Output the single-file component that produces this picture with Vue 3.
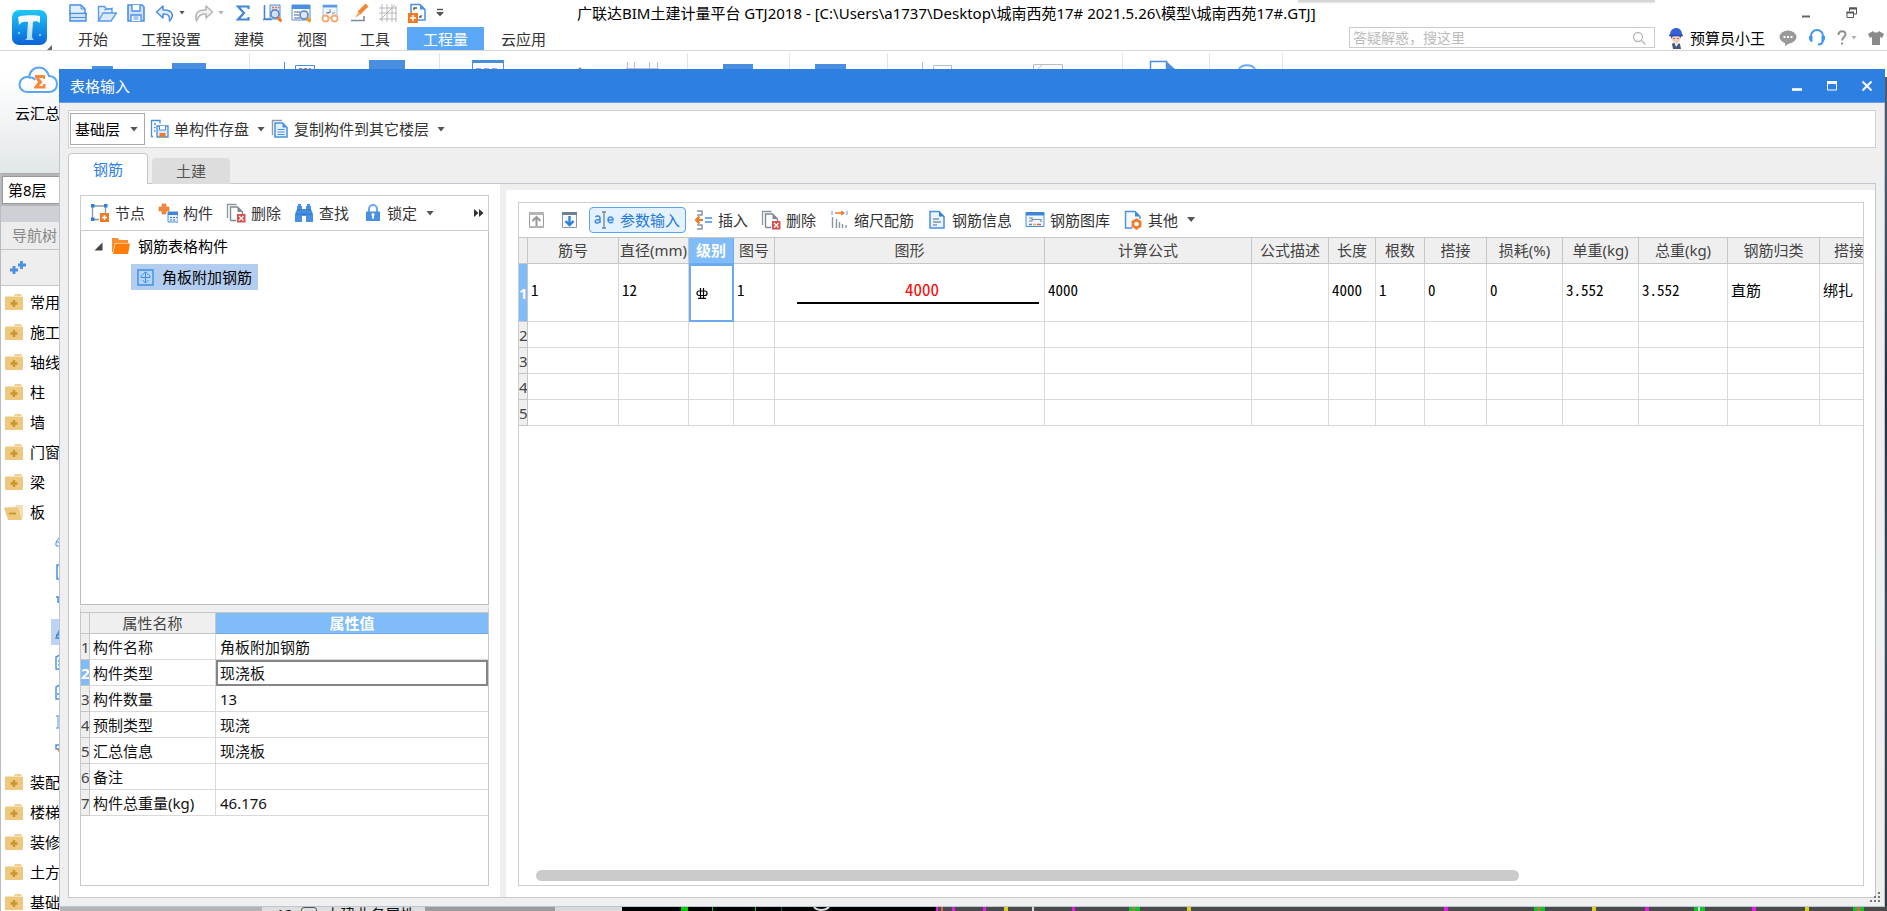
<script setup>
import { ref } from 'vue'

const icons = {
  newFile: '<path d="M2 2h11l4 4v5H2z" fill="#e4effc" stroke="#4a90e2" stroke-width="1.5"/><path d="M13 2v4h4" fill="none" stroke="#4a90e2"/><path d="M1 10.500h18M2 14h16" stroke="#4a90e2" stroke-width="1.500"/><path d="M2 11v7h16v-7" fill="#cfe2fa" stroke="#4a90e2" stroke-width="1.500"/><path d="M3 14.500h14" stroke="#4a90e2"/>',
  open: '<path d="M1.500 18V3.500h6l2 2.500H15v4" fill="#e4effc" stroke="#5a9ce8" stroke-width="1.400"/><path d="M1.500 18 6 10h13.500L14 18z" fill="#dbe9fb" stroke="#5a9ce8" stroke-width="1.400"/><path d="m7 7 9-2" stroke="#5a9ce8"/>',
  save: '<path d="M2 2h14l2 2v14H2z" fill="#cfe2fa" stroke="#4a90e2" stroke-width="1.600"/><path d="M6 2v6h8V2M5 18v-6h10v6" fill="#fff" stroke="#4a90e2" stroke-width="1.400"/><path d="M7.500 14h5M7.500 16h5" stroke="#4a90e2"/>',
  undo: '<path d="M8 3 1.500 9 8 15v-4c5-.5 7 1.500 6.500 7 5.500-6 2.500-11.500-6.500-11z" fill="#e4effc" stroke="#4a90e2" stroke-width="1.500" stroke-linejoin="round"/>',
  redo: '<path d="m12 3 6.500 6L12 15v-4c-5-.5-8 1.500-9.500 7C.5 11 3 6.500 12 7z" fill="#f2f2f2" stroke="#b4b4b4" stroke-width="1.500" stroke-linejoin="round"/>',
  sigma: '<path d="M15.500 6V3.500H5l6 6.500-6 6.500h10.500V14" fill="none" stroke="#3f86d8" stroke-width="2.200"/>',
  report: '<path d="M2.500 2v14H10M1 16.500h9" fill="none" stroke="#4a86cc" stroke-width="1.600"/><path d="M8 2h10v14H8z" fill="#dbe9fb" stroke="#4a90e2"/><path d="M10 4.500h2m1 0h2m1 0h1M10 7h2m1 0h2" stroke="#f0683c" stroke-width="1.500"/><circle cx="13" cy="11" r="4" fill="#cfe2fa" stroke="#5a82c8" stroke-width="1.600"/><path d="m15.500 14 4 4.500" stroke="#ec7a31" stroke-width="3"/>',
  tableView: '<path d="M1 2h18v15H1z" fill="#fff" stroke="#4a90e2"/><path d="M1 2h18v4H1z" fill="#4a90e2"/><path d="M3 9h6M3 12h5M3 15h6" stroke="#8a99a8" stroke-width="1.400"/><circle cx="13" cy="12" r="4" fill="#dbe9fb" stroke="#5a82c8" stroke-width="1.600"/><path d="m16 15 3.500 3.500" stroke="#f39a1e" stroke-width="3.400"/>',
  glasses: '<path d="M3 14V2h14v12" fill="#eef5fd" stroke="#9dc3ee"/><path d="M3 2h14v2.500H3z" fill="#5a9ce8"/><path d="M10 6v3m-4 1h3l2-1.500M12 10h3" stroke="#7f93a6"/><g fill="#fff" stroke="#f6a874" stroke-width="1.800"><circle cx="5.500" cy="15.500" r="3"/><circle cx="14.500" cy="15.500" r="3"/></g><path d="M8.500 15h3" stroke="#f6a874" stroke-width="1.500"/>',
  brush: '<path d="m18 2-8 8" stroke="#f58634" stroke-width="4"/><path d="m10 8.500 2 2.500-6 4z" fill="#f7a35f"/><path d="M2 17.500h13V13" fill="none" stroke="#7f8c99" stroke-width="1.600"/>',
  grid: '<path d="M4 1v18M9 1v18M14 1v18M18 3v16M1 5h18M1 10h18M1 16h18M2 17 17 2" stroke="#b8b8b8" fill="none"/>',
  addDoc: '<path d="M4 11V1.500h9l5 5V17h-7" fill="#fff" stroke="#4a90e2" stroke-width="1.500"/><path d="M13 1.500v5h5z" fill="#4a90e2"/><path d="M7 7V5h3M12 14h2v-2" fill="none" stroke="#555" stroke-width="1.300"/><path d="M1 10h10v10H1z" fill="#f07a26"/><path d="M6 12v6m-3-3h6" stroke="#fff" stroke-width="1.600"/>',
  compSave: '<path d="M3 17.500H1.500v-16H10v3" fill="none" stroke="#4a90e2" stroke-width="1.300"/><path d="M4 5h2M4 8.500h1.500M4 12h1.500" stroke="#4a90e2" stroke-width="1.500"/><path d="M7 7h11v11H7z" fill="#dbe9fb" stroke="#4a90e2" stroke-width="1.300"/><path d="M9.500 7v4h6V7" fill="#fff" stroke="#4a90e2"/><path d="M9.500 14h6v4h-6z" fill="#f07a26"/>',
  copyDoc: '<path d="M2.500 16V1.500H12" fill="none" stroke="#8a99a8" stroke-width="1.400"/><path d="M5 4h7.500L17 8.500V18H5z" fill="#e4effc" stroke="#4a90e2" stroke-width="1.500"/><path d="M12.500 4v4.500H17z" fill="#4a90e2"/><path d="M7.500 10.500h7M7.500 13h7M7.500 15.500h7" stroke="#4a90e2" stroke-width="1.200"/>',
  node: '<path d="M2.500 3h13v7M9 16.500H2.500V3" fill="none" stroke="#8a99a8" stroke-width="1.300"/><path d="M1 1h3.500v3.500H1zM14 1h3.500v3.500H14zM1 14.500h3.500V18H1z" fill="#2f7fdc"/><path d="M10 10h9v9h-9z" fill="#f07a26"/><path d="M14.500 12v5M12 14.500h5" stroke="#fff" stroke-width="1.400"/>',
  component: '<path d="M4 1h4v3h3v4H8v3H4V8H1V4h3z" fill="#f08a3c" stroke="#e87424" stroke-width=".6"/><path d="M10 9h10v10H10z" fill="#e4effc" stroke="#4a90e2"/><path d="M10 9h10v3H10z" fill="#3f86d8"/><path d="M12 14.500h2m1 0h2m1 0h1M12 17h2m1 0h2" stroke="#4a6f9e" stroke-width="1.200"/>',
  remove: '<path d="M1.500 15V1.500h9" fill="none" stroke="#8a949e" stroke-width="1.300"/><path d="M4.500 17.500V4h7l5 5v2M4.500 17.500H10" fill="none" stroke="#7d8891" stroke-width="1.400"/><path d="M11.500 4v5h5z" fill="#7d8891"/><path d="M11 11h8.500v8.500H11z" fill="#d65050"/><path d="m13 13 4.500 4.500m0-4.500L13 17.500" stroke="#fff" stroke-width="1.200"/>',
  find: '<path d="M4 1h3v2h1v3h4V3h1V1h3v2h1v3l2 5v8h-7v-6H8v6H1v-8l2-5V3h1z" fill="#4a90e2"/><path d="M3 7h5M12 7h5M2 11h16" stroke="#2d6fc0"/>',
  lock: '<path d="M7 9V6a4 4 0 0 1 8 0v3" fill="none" stroke="#6aa6ee" stroke-width="2"/><path d="M4 8.500h14V18H4z" fill="#4a90e2"/><path d="M11 11v4.500" stroke="#fff" stroke-width="2"/><circle cx="11" cy="11.500" r="1.600" fill="#fff"/>',
  up: '<path d="M2.500 3.500h14v14h-14z" fill="#fff" stroke="#9a9a9a"/><path d="M2 2h15v3H2zM2 16h15v2H2z" fill="#b4b4b4"/><path d="M9.500 16V8M5.500 11l4-4 4 4" fill="none" stroke="#999" stroke-width="2"/>',
  down: '<path d="M2.500 3.500h14v14h-14z" fill="#f6faff" stroke="#8a97a5"/><path d="M2 2h15v3H2z" fill="#6f8093"/><path d="M9.500 6v8M5.500 11l4 4 4-4" fill="none" stroke="#2f7fdc" stroke-width="2.400"/>',
  param: '<g fill="none" stroke="#3d8ae4" stroke-width="1.500"><path d="M1.500 7c1-1.500 4.500-1.500 4.500 1v5M6 9.500c-3 0-4.800.3-4.800 2 0 2.200 3.800 2 4.800 0M14 10h5c0-4-5-4-5 0 0 3.200 3.500 3.500 5 1.800"/></g><path d="M8 2h4M8 18h4M10 2v16" stroke="#77838f" stroke-width="1.300"/>',
  insert: '<path d="M3 1h5v4H3M3 15h5v4H3" fill="none" stroke="#8a949e" stroke-width="1.500"/><path d="M9 10H2m3.500-3.500L2 10l3.500 3.500" fill="none" stroke="#f07a26" stroke-width="2.200"/><path d="M11 8h7M11 12h7" stroke="#4a90e2" stroke-width="1.700"/>',
  scale: '<path d="M6 3h9m-3-2 3 2-3 2" fill="none" stroke="#f07a26" stroke-width="1.300"/><path d="M3 1v4M18 1v4" stroke="#7fb0ea" stroke-width="1.300"/><path d="M3.500 7v11M7.500 9v9M10.500 12v6M13.500 14v4M17 15v3" stroke="#8a949e" stroke-width="1.400"/>',
  info: '<path d="M3 1.500h9l5 5V18H3z" fill="#eaf3fe" stroke="#4a90e2" stroke-width="1.500"/><path d="M12 1.500v5h5z" fill="#2f7fdc"/><path d="M6 9h6M6 12h8M6 15h4" stroke="#8296ab" stroke-width="1.300"/>',
  library: '<path d="M1 2.500h18v14H1z" fill="#eef5fd" stroke="#4a90e2"/><path d="M1 2h18v3.500H1z" fill="#3f86d8"/><path d="M4 8h3v3H4m3-1.500h9V12" fill="none" stroke="#7f8c99" stroke-width="1.200"/><path d="M4 14.500h3" stroke="#4a90e2" stroke-width="1.500"/><path d="M8 14.500h3" stroke="#e0b22e" stroke-width="1.500"/><path d="M12 14.500h4" stroke="#e05a5a" stroke-width="1.500"/>',
  other: '<path d="M9 18H2.500V1.500H12l5 5V9" fill="#f3f8ff" stroke="#4a90e2" stroke-width="1.400"/><path d="M12 1.500v5h5z" fill="#3f86d8"/><circle cx="13.500" cy="14" r="3.600" fill="#fff" stroke="#f07a26" stroke-width="2.600"/><path d="M13.500 8.500V10m0 8v1.700M8.800 11.200l1.400.9m6.600 3.800 1.400.8M8.800 16.800l1.400-.9m6.600-3.800 1.400-.9" stroke="#f07a26" stroke-width="2.200"/>',
}

const quick = [
  { icon: 'newFile', label: '新建' },
  { icon: 'open', label: '打开' },
  { icon: 'save', label: '保存' },
  { icon: 'undo', label: '撤销', menu: 'dark' },
  { icon: 'redo', label: '恢复', menu: 'pale' },
  { icon: 'sigma', label: '汇总计算' },
  { icon: 'report', label: '查看报表' },
  { icon: 'tableView', label: '查看工程量' },
  { icon: 'glasses', label: '查看计算式' },
  { icon: 'brush', label: '格式刷' },
  { icon: 'grid', label: '轴网' },
  { icon: 'addDoc', label: '新增图纸' },
]

const menus = ['开始', '工程设置', '建模', '视图', '工具', '工程量', '云应用']
const activeMenu = ref('工程量')

const navTop = ['常用', '施工', '轴线', '柱', '墙', '门窗', '梁']
const navSub = [
  '<path d="M1 9 5 4v9H1zM1 9h4" fill="none" stroke="#4a90e2"/>',
  '<path d="M5 2H2v14h3" fill="none" stroke="#4a90e2" stroke-width="1.500"/>',
  '<path d="M1 4h4M3 4v5h2" fill="none" stroke="#4a90e2" stroke-width="1.500"/>',
  '<path d="M1 15 5 6v9zM1 12h4" fill="none" stroke="#3f86d8" stroke-width="1.400"/>',
  '<path d="M5 2 1 4v12h4M3 8h2M3 12h2" fill="none" stroke="#4a90e2" stroke-width="1.400"/>',
  '<path d="M5 2 1 4v12h4M2 11h3" fill="none" stroke="#4a90e2" stroke-width="1.400"/>',
  '<path d="M1 3h4M1 15h4M3 3v12" fill="none" stroke="#7fb0ea" stroke-width="1.300"/>',
  '<path d="M1 2h4v4H1z" fill="none" stroke="#4a90e2" stroke-width="1.400"/><path d="m2 6 3 5V6z" fill="#f07a26"/>',
]
const navBottom = ['装配', '楼梯', '装修', '土方', '基础']

const treeTools = [
  { icon: 'node', label: '节点' },
  { icon: 'component', label: '构件' },
  { icon: 'remove', label: '删除' },
  { icon: 'find', label: '查找' },
  { icon: 'lock', label: '锁定', menu: true },
]
const gridTools = [
  { icon: 'insert', label: '插入', slim: true },
  { icon: 'remove', label: '删除' },
  { icon: 'scale', label: '缩尺配筋' },
  { icon: 'info', label: '钢筋信息' },
  { icon: 'library', label: '钢筋图库' },
  { icon: 'other', label: '其他', menu: true },
]

const props = [
  ['构件名称', '角板附加钢筋'],
  ['构件类型', '现浇板'],
  ['构件数量', '13'],
  ['预制类型', '现浇'],
  ['汇总信息', '现浇板'],
  ['备注', ''],
  ['构件总重量(kg)', '46.176'],
]

const columns = [
  { key: 'no', title: '筋号', value: '1' },
  { key: 'dia', title: '直径(mm)', value: '12' },
  { key: 'grade', title: '级别' },
  { key: 'fig', title: '图号', value: '1' },
  { key: 'shape', title: '图形' },
  { key: 'formula', title: '计算公式', value: '4000' },
  { key: 'desc', title: '公式描述', value: '' },
  { key: 'len', title: '长度', value: '4000' },
  { key: 'count', title: '根数', value: '1' },
  { key: 'lap', title: '搭接', value: '0' },
  { key: 'loss', title: '损耗(%)', value: '0' },
  { key: 'unit', title: '单重(kg)', value: '3.552' },
  { key: 'total', title: '总重(kg)', value: '3.552' },
  { key: 'kind', title: '钢筋归类', value: '直筋' },
  { key: 'lapkind', title: '搭接', value: '绑扎' },
]
</script>

<template>
  <div class="app" lang="zh-CN">
    <header class="header">
      <div class="top-shade"></div>
      <button class="logo" aria-label="应用菜单">
        <svg width="57" height="50" viewBox="0 0 57 50">
          <defs>
            <linearGradient id="logoBg" x1="0" y1="0" x2="0" y2="1">
              <stop offset="0" stop-color="#1fc8f6" />
              <stop offset="1" stop-color="#0a62d8" />
            </linearGradient>
            <linearGradient id="logoT" x1="0" y1="0" x2="0" y2="1">
              <stop offset="0" stop-color="#fff" />
              <stop offset="1" stop-color="#a9d8fb" />
            </linearGradient>
          </defs>
          <rect x="12" y="10" width="35" height="35" rx="7" fill="url(#logoBg)" />
          <path d="M18 17c4-2 18-2 22-1v7c-3-2-5-2-7-1l-1 14c0 2 1 3 2 4h-9c2-1 2-2 2-4l1-14c-4-1-7 0-9 3z" fill="url(#logoT)" />
          <circle cx="19" cy="33" r="1" fill="#9be0ff" /><circle cx="40" cy="35" r="1" fill="#9be0ff" />
          <path d="M52 45v5h-5z" fill="#666" />
        </svg>
      </button>
      <div class="header-rows">
        <div class="row-title">
          <div class="quick">
            <button v-for="q in quick" :key="q.icon" class="tool quick-btn" :aria-label="q.label">
              <svg width="20" height="20" viewBox="0 0 20 20" v-html="icons[q.icon]"></svg>
              <i v-if="q.menu" class="caret small" :class="q.menu"></i>
            </button>
            <button class="tool" aria-label="自定义快速访问">
              <svg width="8" height="10" viewBox="0 0 8 10"><path d="M1 1.500h6" stroke="#555" stroke-width="1.400" /><path d="M0 4h8L4 8.500z" fill="#555" /></svg>
            </button>
          </div>
          <div class="doc-title">广联达BIM土建计量平台 GTJ2018 - [C:\Users\a1737\Desktop\城南西苑17# 2021.5.26\模型\城南西苑17#.GTJ]</div>
          <div class="app-controls">
            <button class="tool" aria-label="最小化"><svg width="8" height="12" viewBox="0 0 8 12"><path d="M0 9.500h8" stroke="#666" stroke-width="2" /></svg></button>
            <button class="tool" aria-label="还原"><svg width="12" height="12" viewBox="0 0 12 12"><path d="M3.500 4V1h7v6H8" fill="none" stroke="#555" /><path d="M3 1.500h8" stroke="#555" stroke-width="2" /><path d="M1 5.500h6.500v5H1z" fill="#fff" stroke="#555" /><path d="M.5 5.500h7.500" stroke="#555" stroke-width="2" /></svg></button>
          </div>
        </div>
        <div class="row-menu">
          <nav class="menus">
            <button v-for="m in menus" :key="m" class="menu" :class="{ active: m === activeMenu }" @click="activeMenu = m">{{ m }}</button>
          </nav>
          <div class="account">
            <label class="search">
              <input type="text" placeholder="答疑解惑，搜这里" aria-label="答疑解惑，搜这里" />
              <svg width="14" height="14" viewBox="0 0 14 14"><circle cx="6" cy="6" r="4.500" fill="none" stroke="#bbb" stroke-width="1.300" /><path d="m9.500 9.500 4 4" stroke="#bbb" stroke-width="1.500" /></svg>
            </label>
            <button class="tool user">
              <svg width="14" height="22" viewBox="0 0 14 22"><path d="M3 17c2-2 6-2 8 0l1 5H4z" fill="#44567c" /><path d="m5 15 2 5 3-4z" fill="#eee" /><path d="M2 8h10c0 5-2 8-5 8S2 12 2 8z" fill="#f3cdbd" /><path d="M2 8h10v3l-2-2H4l-2 3z" fill="#5b4652" /><path d="M1 8C1 3 4 1 7.500 1S13 4 13 8z" fill="#3462d6" /><path d="M0 8.500h14" stroke="#2a4fb4" stroke-width="1.600" /><path d="M4.500 11.500h1m3 0h1" stroke="#333" /></svg>
              <span>预算员小王</span>
            </button>
            <button class="tool chat" aria-label="消息"><svg width="18" height="16" viewBox="0 0 18 16"><ellipse cx="9" cy="7" rx="8.500" ry="6.500" fill="#999" /><path d="M6 12v4l5-3z" fill="#999" /><path d="M4.500 7h2m1.500 0h2m1.500 0h2" stroke="#fff" stroke-width="1.800" /></svg></button>
            <button class="tool" aria-label="客服"><svg width="18" height="17" viewBox="0 0 18 17"><path d="M3 9V7a6 6 0 0 1 12 0v4c0 3-2 4.500-5 4.500" fill="none" stroke="#3f97f5" stroke-width="2" /><path d="M1 7h3.500v6C2 13 1 11 1 9zM17 7h-3.500v6C16 13 17 11 17 9z" fill="#3f97f5" /></svg></button>
            <button class="tool help" aria-label="帮助"><svg width="10" height="15" viewBox="0 0 10 15"><path d="M1.500 5C1 0 9 0 8.500 4.500 8.500 7 5 7 5 10.500" fill="none" stroke="#8e8e8e" stroke-width="2" /><path d="M4 12.500h2v2H4z" fill="#8e8e8e" /></svg><i class="caret small pale"></i></button>
            <button class="tool" aria-label="皮肤"><svg width="16" height="16" viewBox="0 0 16 16"><path d="M5 1c1 2 5 2 6 0l5 3-2 4-2-1v8H4V7L2 8 0 4z" fill="#8a8a8a" /></svg></button>
          </div>
        </div>
      </div>
    </header>

    <section class="ribbon">
      <svg class="ribbon-art" width="1300" height="18" viewBox="0 0 1300 18" aria-hidden="true">
        <path d="M249.500 2v16M439.500 2v16M687.500 2v16M789.500 2v16M887.500 2v16M1122.500 2v16M1209.500 2v16M1282.500 2v16" stroke="#e2e2e2" />
        <path d="M92 15h21v3H92zM172 12h34v6h-34zM369 9h36v9h-36zM472 9h32v3h-32zM723 13h30v5h-30zM815 13h31v5h-31z" fill="#4a8fdf" />
        <path d="M284.500 11v7M472.500 9v9M503.500 9v9M295.500 18v-3.500h19V18" fill="none" stroke="#4a8fdf" />
        <path d="M299 17.500h12" stroke="#f0683c" stroke-dasharray="3 2" />
        <path d="M476 17.500h24" stroke="#aaa" stroke-dasharray="5 3" />
        <path d="m578 18 2-2 2 2z" fill="#f07a26" />
        <path d="M627.500 11v7M634.500 11v7M649.500 11v7M657.500 11v7M626 17.500h33M922.500 11v7M933.500 18v-3.500h18V18M1033.500 18v-4.500h29V18M1038 18l4-4" fill="none" stroke="#bdbdbd" />
        <path d="M1150.500 18v-7.500h16V18" fill="#fff" stroke="#4a8fdf" stroke-width="1.500" /><path d="M1166 10v8h9z" fill="#4a8fdf" />
        <path d="M1239 18c3-5 13-5 16 0" fill="none" stroke="#6aa9f2" stroke-width="2" />
      </svg>
      <button class="tool cloud">
        <svg width="40" height="28" viewBox="0 0 40 28"><path d="M9 26a7.500 7.500 0 0 1 0-15h2C12 4 17 1.500 21 1.500S29 4 31 10c5 0 8 3.500 8 8s-3 8-8 8H9" fill="none" stroke="#5aa5f5" stroke-width="2" /><path d="M11 12c3-1 5 0 6 2" fill="none" stroke="#5aa5f5" stroke-width="2" /><path d="M17 9h10v4h-2v-1h-4l3.500 4-3.500 4h4v-2h2.500v4.500H16V21l4-5-3-4.500z" fill="#f58a3c" /></svg>
        <span>云汇总</span>
      </button>
    </section>

    <div class="workspace">
      <aside class="sidebar">
        <div class="floor"><label><select aria-label="楼层"><option>第8层</option></select></label></div>
        <div class="side-gap"></div>
        <div class="side-title">导航树</div>
        <div class="side-tools"><button class="tool" aria-label="展开"><svg width="16" height="14" viewBox="0 0 16 14"><path d="M4 5v8M0 9h8M11.500 0v8M8 4h8" stroke="#4a90e2" stroke-width="2.800" /></svg></button></div>
        <ul class="nav">
          <li v-for="n in navTop" :key="n"><svg width="18" height="16" viewBox="0 0 18 16"><path d="m9 2 1-2h6l1 2z" fill="#f2cf8f" /><rect y="2.500" width="18" height="13.500" rx="1" fill="#eec87f" /><path d="M9 6v7M5.500 9.500h7" stroke="#c8962f" stroke-width="2.400" /></svg><span>{{ n }}</span></li>
          <li class="open"><svg width="20" height="16" viewBox="0 0 20 16"><path d="M3 3h8l1-2h7v13l-3 1z" fill="#f6deb0" /><path d="M0 3.500h14L18 16H4z" fill="#eec87f" /><path d="M5 9.500h7" stroke="#c8962f" stroke-width="1.800" /></svg><span>板</span></li>
          <li v-for="(s, i) in navSub" :key="i" class="sub" :class="{ current: i === 3 }"><svg width="5" height="18" viewBox="0 0 5 18" v-html="s"></svg></li>
          <li v-for="n in navBottom" :key="n"><svg width="18" height="16" viewBox="0 0 18 16"><path d="m9 2 1-2h6l1 2z" fill="#f2cf8f" /><rect y="2.500" width="18" height="13.500" rx="1" fill="#eec87f" /><path d="M9 6v7M5.500 9.500h7" stroke="#c8962f" stroke-width="2.400" /></svg><span>{{ n }}</span></li>
        </ul>
      </aside>
      <div class="stage">
        <div class="under">
          <div class="under-props"><span>12</span><i></i><span>土建业务属性</span></div>
          <svg class="under-view" height="4" aria-hidden="true">
            <rect width="100%" height="4" fill="#4a4a4c" /><rect width="315" height="4" fill="#000" />
            <path d="M59 0h7v4h-7zM90 0h1v4h-1zM133 0h1v4h-1z" fill="#0c0" /><path d="M159 0h1v4h-1z" fill="#063" />
            <path d="M192 0c3 4 11 4 15 0" fill="none" stroke="#ddd" stroke-width="2" />
            <path d="M314 0h2v4h-2zM330 0h3v4h-3zM361 0h3v4h-3zM450 0h3v4h-3zM822 0h4v4h-4zM1023 0h4v4h-4zM1130 0h4v4h-4z" fill="#e01ee0" />
            <path d="M382 0h4v4h-4zM565 0h4v4h-4zM970 0h4v4h-4zM1183 0h4v4h-4z" fill="#dcd01e" />
            <path d="M507 0h11v4h-11zM912 0h11v4h-11zM1072 0h11v4h-11zM1231 0h11v4h-11z" fill="#14c028" />
            <path d="M319 0h2v4h-2zM511 0h2v4h-2zM916 0h2v4h-2zM1235 0h3v4h-3z" fill="#e06050" />
            <path d="M410 0h2v4h-2zM1076 0h2v4h-2z" fill="#ddd" />
          </svg>
        </div>
      </div>
    </div>

    <section class="dialog" role="dialog" aria-labelledby="dialogTitle">
      <header class="dialog-bar">
        <h1 id="dialogTitle">表格输入</h1>
        <div class="dialog-controls">
          <button class="tool" aria-label="最小化"><svg width="12" height="12" viewBox="0 0 12 12"><path d="M1 9.500h10" stroke="#fff" stroke-width="2.600" /></svg></button>
          <button class="tool" aria-label="最大化"><svg width="12" height="12" viewBox="0 0 12 12"><path d="M1.500 2h9v8h-9z" fill="none" stroke="#fff" /><path d="M1 2.500h10" stroke="#fff" stroke-width="3" /></svg></button>
          <button class="tool" aria-label="关闭"><svg width="12" height="12" viewBox="0 0 12 12"><path d="m1.500 1.500 9 9m0-9-9 9" stroke="#fff" stroke-width="2" /></svg></button>
        </div>
      </header>
      <div class="dialog-body">
        <div class="main-tools">
          <label class="combo"><select aria-label="楼层选择"><option>基础层</option></select><i class="caret"></i></label>
          <button class="tool"><svg width="20" height="20" viewBox="0 0 20 20" v-html="icons.compSave"></svg><span>单构件存盘</span><i class="caret"></i></button>
          <button class="tool"><svg width="20" height="20" viewBox="0 0 20 20" v-html="icons.copyDoc"></svg><span>复制构件到其它楼层</span><i class="caret"></i></button>
        </div>
        <div class="tabs" role="tablist">
          <button class="tab on" role="tab" aria-selected="true">钢筋</button>
          <button class="tab off" role="tab" aria-selected="false">土建</button>
        </div>
        <div class="pane">
          <div class="left">
            <div class="bar tree-bar">
              <button v-for="t in treeTools" :key="t.icon" class="tool"><svg width="20" height="20" viewBox="0 0 20 20" v-html="icons[t.icon]"></svg><span>{{ t.label }}</span><i v-if="t.menu" class="caret"></i></button>
              <button class="tool more" aria-label="更多"><svg width="10" height="8" viewBox="0 0 10 8"><path d="m0 0 4.500 4L0 8zm5 0 4.500 4L5 8z" fill="#333" /></svg></button>
            </div>
            <ul class="tree">
              <li class="node">
                <svg width="9" height="9" viewBox="0 0 9 9"><path d="M8.500.5v8h-8z" fill="#444" /></svg>
                <svg width="19" height="18" viewBox="0 0 19 18"><path d="M1 1h6l1 2h9v3H4L2 15H1z" fill="#f9902c" /><path d="M4.500 6.500H19L17 17H2z" fill="#ff7d0a" /></svg>
                <span>钢筋表格构件</span>
              </li>
              <li class="node leaf">
                <svg width="17" height="17" viewBox="0 0 17 17"><path d="M1 1h15v15H1z" fill="#b5d6fb" stroke="#3f8ee6" stroke-width="1.400" /><path d="M8.500 3v11M6.500 4.500l2-1.500 2 1.500M4 8.500h9M4 8.500c0-2 1-3 2.500-3M13 8.500c0-2-1-3-2.500-3M5.500 11l3 3 3-3" fill="none" stroke="#3f8ee6" /></svg>
                <span>角板附加钢筋</span>
              </li>
            </ul>
            <div class="props">
              <table>
                <colgroup><col class="c-idx" /><col class="c-name" /><col /></colgroup>
                <thead><tr><th></th><th>属性名称</th><th class="hot">属性值</th></tr></thead>
                <tbody>
                  <tr v-for="(p, i) in props" :key="p[0]" :class="{ current: i === 1 }"><th>{{ i + 1 }}</th><td>{{ p[0] }}</td><td class="val">{{ p[1] }}</td></tr>
                </tbody>
              </table>
            </div>
          </div>
          <div class="splitter"></div>
          <div class="right">
            <div class="bar grid-bar">
              <button class="tool sq" aria-label="上移"><svg width="20" height="20" viewBox="0 0 20 20" v-html="icons.up"></svg></button>
              <button class="tool sq" aria-label="下移"><svg width="20" height="20" viewBox="0 0 20 20" v-html="icons.down"></svg></button>
              <button class="tool toggled"><svg width="20" height="20" viewBox="0 0 20 20" v-html="icons.param"></svg><span>参数输入</span></button>
              <button v-for="t in gridTools" :key="t.icon" class="tool"><svg :width="t.slim ? 18 : 20" height="20" :viewBox="t.slim ? '1 0 18 20' : '0 0 20 20'" v-html="icons[t.icon]"></svg><span>{{ t.label }}</span><i v-if="t.menu" class="caret"></i></button>
            </div>
            <div class="grid">
              <table>
                <colgroup><col class="g-idx" /><col v-for="c in columns" :key="c.key" :class="'g-' + c.key" /></colgroup>
                <thead><tr><th></th><th v-for="c in columns" :key="c.key" :class="['h-' + c.key, { hot: c.key === 'grade' }]">{{ c.title }}</th></tr></thead>
                <tbody>
                  <tr class="filled">
                    <th>1</th>
                    <td v-for="c in columns" :key="c.key" :class="'d-' + c.key">
                      <svg v-if="c.key === 'grade'" width="12" height="11" viewBox="0 0 12 11" role="img" aria-label="三级钢"><rect x="1" y="3" width="10" height="4.500" rx="2" fill="none" stroke="#000" stroke-width="1.200" /><path d="M4.500 0v10.500M7.500 0v10.500M2 10.400h8" fill="none" stroke="#000" stroke-width="1.200" /></svg>
                      <div v-else-if="c.key === 'shape'" class="bar-shape">4000</div>
                      <template v-else>{{ c.value }}</template>
                    </td>
                  </tr>
                  <tr v-for="n in [2, 3, 4, 5]" :key="n"><th>{{ n }}</th><td v-for="c in columns" :key="c.key"></td></tr>
                </tbody>
              </table>
              <div class="scroll"><div class="thumb"></div></div>
            </div>
          </div>
        </div>
      </div>
      <svg class="grip" width="10" height="10" viewBox="0 0 10 10" aria-hidden="true"><path d="M8 0h2v2H8zM4 4h2v2H4zM8 4h2v2H8zM0 8h2v2H0zM4 8h2v2H4zM8 8h2v2H8z" fill="#777" /></svg>
    </section>
  </div>
</template>

<style>
body { margin: 0; overflow: hidden; }
</style>

<style scoped>
.app { position: relative; display: flex; flex-direction: column; height: 100vh; overflow: hidden; background: #fff; color: #111; font: 15px/20px "Noto Sans", "Noto Sans CJK SC", sans-serif; }
.app *, .app *::before { box-sizing: border-box; }
button, select, input { font: inherit; color: inherit; border: 0; background: none; padding: 0; margin: 0; border-radius: 0; }
select { appearance: none; outline: none; }
ul { list-style: none; margin: 0; padding: 0; }
svg { display: block; flex: none; }
.tool { display: flex; align-items: center; white-space: nowrap; }
.caret { flex: none; width: 8px; height: 5px; background: #555; clip-path: polygon(0 0, 100% 0, 50% 100%); }
.caret.small { width: 6px; height: 4px; }
.caret.pale { background: #b0b0b0; }

.header { display: flex; flex: none; height: 51px; border-bottom: 1px solid #d6d6d6; }
.top-shade { position: absolute; top: 0; right: 232px; width: 357px; height: 2px; background: #d6d6d6; box-shadow: 0 1px 2px #ddd; }
.logo { flex: none; width: 57px; }
.header-rows { flex: 1; display: flex; flex-direction: column; min-width: 0; }
.row-title { display: flex; align-items: center; height: 28px; padding: 0 29px 2px 11px; }
.quick { display: flex; align-items: center; gap: 9px; }
.quick-btn { gap: 4px; }
.doc-title { margin-left: 133px; white-space: nowrap; color: #000; }
.app-controls { display: flex; gap: 36px; margin-left: auto; }
.row-menu { display: flex; justify-content: space-between; height: 23px; padding-right: 3px; }
.menus { display: flex; gap: 1px; padding-left: 5px; }
.menu { padding: 0 16px; color: #333; white-space: nowrap; }
.menu.active { background: #5ba8f8; color: #fff; }
.account { display: flex; align-items: center; gap: 11px; padding-bottom: 2px; }
.search { display: flex; align-items: center; width: 306px; height: 21px; padding: 0 8px 0 3px; border: 1px solid #ccc; }
.search input { flex: 1; min-width: 0; height: 18px; font-size: 14px; outline: none; }
.search input::placeholder { color: #bbb; }
.user { gap: 7px; margin: 0 3px; color: #000; }
.help { gap: 4px; }

.ribbon { position: relative; flex: none; height: 122px; background: linear-gradient(#4f5a66, #4f5a66) right 26px / 2px 100% no-repeat, linear-gradient(#fff 20%, #e2e7ea); }
.ribbon-art { position: absolute; left: 0; top: 0; }
.cloud { flex-direction: column; gap: 9px; padding: 15px 0 0 15px; color: #000; }

.workspace { flex: 1; display: flex; min-height: 0; }
.sidebar { flex: none; width: 60px; overflow: hidden; border-left: 1px solid #b9bdc1; background: #fff; }
.floor { padding: 2px 0 2px 1px; border-top: 1px solid #aaa; background: #b4b6b9; }
.floor select { width: 70px; height: 28px; padding-left: 5px; border: 1px solid #999; background: #fff; color: #000; }
.side-gap { height: 16px; background: #cfd0d5; }
.side-title { height: 28px; padding: 3px 0 0 11px; border-bottom: 1px solid #c4c4c4; background: #ececec; color: #888; white-space: nowrap; }
.side-tools { display: flex; align-items: center; height: 36px; padding-left: 9px; border-bottom: 1px solid #c4c4c4; background: #eee; }
.nav { display: flex; flex-direction: column; padding-top: 1px; }
.nav li { flex: none; display: flex; align-items: center; height: 30px; gap: 7px; padding-left: 4px; color: #000; white-space: nowrap; }
.nav li.open { padding-left: 3px; gap: 6px; }
.nav li.sub { height: 26px; margin: 2px 0 2px 50px; }
.nav li.current { background: #bcd3f2; }
.stage { flex: 1; display: flex; flex-direction: column; justify-content: flex-end; min-width: 0; background: linear-gradient(#4b5a6c, #26303a 30%, #3c4a58 60%, #33373b); }
.under { display: flex; height: 4px; overflow: hidden; }
.under-props { flex: none; display: flex; gap: 8px; width: 562px; height: 20px; padding-left: 216px; background: linear-gradient(90deg, #b4b4b4 36%, #dedede 36%, #dedede 65%, #9b9b9b 65%, #9b9b9b 88%, #dadada 88%); line-height: 14px; }
.under-props i { width: 16px; height: 16px; border: 1px solid #555; border-radius: 3px; }
.under-view { flex: 1; width: 0; }

.dialog { position: absolute; left: 59px; top: 69px; right: 2px; bottom: 4px; display: flex; flex-direction: column; border: 1px solid #bac6d3; border-top: 0; background: #efefef; }
.dialog-bar { flex: none; display: flex; justify-content: space-between; align-items: center; height: 34px; margin: 0 -1px; padding: 0 12px 0 11px; border-bottom: 1px solid #5f9fec; background: #2d80e2; color: #fff; }
.dialog-bar h1 { margin: 0; font-size: 15px; font-weight: 400; }
.dialog-controls { display: flex; gap: 23px; }
.dialog-body { flex: 1; display: flex; flex-direction: column; min-height: 0; padding: 7px 8px 8px; }
.main-tools { flex: none; display: flex; align-items: center; height: 38px; padding-left: 1px; border: 1px solid #ccd1d5; background: #fff; color: #333; }
.main-tools .tool { gap: 4px; margin-left: 5px; }
.main-tools .tool .caret { margin-left: 4px; }
.combo { display: flex; align-items: center; width: 75px; height: 32px; padding: 0 6px 0 4px; border: 1px solid #aaa; }
.combo select { flex: 1; width: 50px; height: 28px; color: #000; }
.tabs { flex: none; display: flex; align-items: flex-end; gap: 4px; height: 31px; margin: 5px 0 -1px; }
.tab { position: relative; }
.tab.on { z-index: 1; width: 80px; height: 31px; border: 1px solid #c3c9ce; border-bottom: 0; border-radius: 4px 4px 0 0; background: #fff; color: #2f80e8; }
.tab.off { width: 78px; height: 26px; border-radius: 4px 4px 0 0; background: #ddd; color: #555; }
.pane { flex: 1; display: flex; min-height: 0; border: 1px solid #c3c9ce; background: #fff; }
.left { flex: none; display: flex; flex-direction: column; width: 431px; padding: 11px; }
.splitter { flex: none; width: 6px; background: #efefef; }
.right { flex: 1; display: flex; flex-direction: column; min-width: 0; padding: 12px 11px 11px 12px; border-top: 6px solid #efefef; }
.bar { flex: none; display: flex; align-items: center; height: 36px; border: 1px solid #c9ced2; color: #333; }
.bar .tool { gap: 5px; }
.bar .caret { margin-left: 4px; }
.tree-bar { padding: 0 4px 0 9px; }
.tree-bar .tool { margin-right: 13px; }
.tree-bar .more { margin: 0 0 0 auto; }
.tree { flex: 1; min-height: 0; border: 1px solid #bcbcbc; border-top: 0; color: #000; }
.node { display: flex; align-items: center; height: 30px; padding-left: 13px; gap: 8px; }
.node.leaf { width: 127px; height: 26px; margin: 3px 0 0 50px; padding-left: 6px; gap: 8px; background: #b2cdef; }
.props { flex: none; height: 281px; border: 1px solid #c8c8c8; border-top: 7px solid #efefef; white-space: nowrap; }
table { width: 100%; table-layout: fixed; border-collapse: separate; border-spacing: 0; }
th, td { padding: 0; overflow: hidden; font-weight: 400; white-space: nowrap; border-right: 1px solid #d9d9d9; border-bottom: 1px solid #d9d9d9; }
th { background: #efefef; color: #444; border-color: #c6c6c6; }
thead th.hot { background: #80bbfa; color: #fff; border-color: #6fabec; font-weight: 700; }
.props thead th { height: 22px; border-top: 1px solid #c6c6c6; }
.props tbody th, .props tbody td { height: 26px; }
.props td { padding-left: 3px; color: #111; }
.props td.val { padding-left: 4px; }
.props th:last-child, .props td:last-child { border-right: 0; }
.props tr.current th { background: #80bbfa; color: #fff; font-weight: 700; }
.props tr.current .val { outline: 2px solid #858585; outline-offset: -2px; }
.c-idx { width: 9px; }
.c-name { width: 126px; }

.grid { flex: 1; display: flex; flex-direction: column; justify-content: space-between; min-height: 0; border: 1px solid #c9ced2; border-top-color: #c6c6c6; margin-top: -1px; }
.grid thead th { height: 26px; padding-bottom: 1px; }
.grid tbody th, .grid tbody td { height: 26px; }
.grid .filled th, .grid .filled td { height: 58px; }
.grid .filled td { padding: 0 0 6px 3px; color: #000; font-family: "Noto Sans CJK SC", sans-serif; font-feature-settings: "hwid"; }
.grid .filled th { background: #80bbfa; color: #fff; font-weight: 700; }
.grid .filled .d-grade { padding: 0 0 0 5px; border: 2px solid #6aaaf0; }
.grid .filled .d-shape { padding: 0; }
.bar-shape { margin: 0 5px 3px 22px; padding: 0 0 2px 8px; border-bottom: 2px solid #000; color: #f00; font-size: 17px; line-height: 22px; text-align: center; }
.grid th.h-lapkind { padding-left: 14px; text-align: left; }
.grid th:last-child, .grid td:last-child { border-right: 0; }
.g-idx { width: 9px; }
.g-no { width: 91px; }
.g-dia { width: 70px; }
.g-grade { width: 45px; }
.g-fig { width: 41px; }
.g-shape { width: 270px; }
.g-desc { width: 77px; }
.g-len { width: 47px; }
.g-count { width: 49px; }
.g-lap { width: 62px; }
.g-loss, .g-unit { width: 76px; }
.g-total { width: 89px; }
.g-kind { width: 92px; }
.g-lapkind { width: 43px; }
.grid-bar { padding: 0 0 1px 4px; }
.grid-bar .tool { height: 26px; margin-right: 5px; padding: 0 4px; }
.grid-bar .toggled { gap: 6px; padding: 0 5px 0 4px; border: 1px solid #5aa3ee; border-radius: 4px; background: #e4f1fe; color: #2479dc; }
.scroll { padding: 0 17px 4px; }
.thumb { width: 75%; height: 11px; border-radius: 6px; background: #cbcbcb; }
.grip { position: absolute; right: 4px; bottom: 4px; }
</style>
